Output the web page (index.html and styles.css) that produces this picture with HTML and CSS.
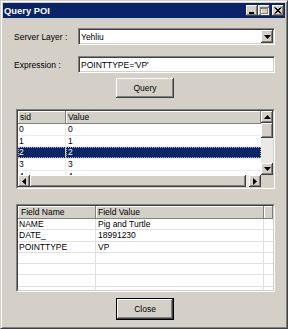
FILE: index.html
```html
<!DOCTYPE html>
<html lang="en">
<head>
    <meta charset="UTF-8">
    <title>Query POI</title>
    <link rel="stylesheet" href="styles.css">
</head>
<body>
    <div class="window">
        <div class="titlebar">
            <span class="title">Query POI</span>
            <div class="caption-buttons">
                <span class="cap-btn">
                    <svg width="8" height="7" viewBox="0 0 8 7"><rect x="1" y="5" width="5" height="2" fill="#000"/></svg>
                </span>
                <span class="cap-btn cap-max">
                    <svg width="9" height="8" viewBox="0 0 9 8"><rect x="1.5" y="1.5" width="7" height="6" fill="none" stroke="#fff"/><rect x="0.5" y="0.5" width="7" height="6" fill="none" stroke="#808080"/><rect x="0" y="0" width="8" height="2" fill="#808080"/></svg>
                </span>
                <span class="cap-btn">
                    <svg width="8" height="7" viewBox="0 0 8 7"><path d="M0.5 0.5 L6.5 6.5 M1.5 0.5 L7.5 6.5 M6.5 0.5 L0.5 6.5 M7.5 0.5 L1.5 6.5" stroke="#000" stroke-width="1"/></svg>
                </span>
            </div>
        </div>

        <div class="dialog">
            <div class="field-row">
                <label class="field-label">Server Layer :</label>
                <div class="combo">
                    <span class="combo-text">Yehliu</span>
                    <span class="combo-btn">
                        <svg width="7" height="4" viewBox="0 0 7 4"><path d="M0 0 H7 L3.5 4 Z" fill="#000"/></svg>
                    </span>
                </div>
            </div>

            <div class="field-row">
                <label class="field-label">Expression :</label>
                <div class="textbox">POINTTYPE='VP'</div>
            </div>

            <div class="btn-row query-row">
                <button class="btn">Query</button>
            </div>

            <!-- result records -->
            <div class="sunken result-grid">
                <div class="grid-inner">
                    <div class="grid-view">
                        <div class="grid-head">
                            <div class="head-cell col-sid">sid</div>
                            <div class="head-cell col-value">Value</div>
                        </div>
                        <div class="grid-row"><div class="cell col-sid">0</div><div class="cell col-value">0</div></div>
                        <div class="grid-row"><div class="cell col-sid">1</div><div class="cell col-value">1</div></div>
                        <div class="grid-row selected"><div class="cell col-sid">2</div><div class="cell col-value">2</div></div>
                        <div class="grid-row"><div class="cell col-sid">3</div><div class="cell col-value">3</div></div>
                        <div class="grid-row"><div class="cell col-sid">4</div><div class="cell col-value">4</div></div>
                    </div>
                    <div class="vscroll">
                        <span class="scroll-btn">
                            <svg width="7" height="4" viewBox="0 0 7 4"><path d="M0 4 H7 L3.5 0 Z" fill="#000"/></svg>
                        </span>
                        <span class="scroll-thumb v-thumb"></span>
                        <span class="scroll-track"></span>
                        <span class="scroll-btn">
                            <svg width="7" height="4" viewBox="0 0 7 4"><path d="M0 0 H7 L3.5 4 Z" fill="#000"/></svg>
                        </span>
                    </div>
                    <div class="hscroll">
                        <span class="scroll-btn">
                            <svg width="4" height="7" viewBox="0 0 4 7"><path d="M4 0 V7 L0 3.5 Z" fill="#000"/></svg>
                        </span>
                        <span class="scroll-thumb h-thumb"></span>
                        <span class="scroll-track"></span>
                        <span class="scroll-btn">
                            <svg width="4" height="7" viewBox="0 0 4 7"><path d="M0 0 V7 L4 3.5 Z" fill="#000"/></svg>
                        </span>
                    </div>
                    <div class="scroll-corner"></div>
                </div>
            </div>

            <!-- selected record fields -->
            <div class="sunken field-list">
                <div class="list-inner">
                    <div class="list-head">
                        <div class="head-cell col-name">Field Name</div>
                        <div class="head-cell col-fvalue">Field Value</div>
                        <div class="head-cell col-rest"></div>
                    </div>
                    <div class="list-row"><div class="lcell col-name">NAME</div><div class="lcell col-fvalue">Pig and Turtle</div><div class="lcell col-rest"></div></div>
                    <div class="list-row"><div class="lcell col-name">DATE_</div><div class="lcell col-fvalue">18991230</div><div class="lcell col-rest"></div></div>
                    <div class="list-row"><div class="lcell col-name">POINTTYPE</div><div class="lcell col-fvalue">VP</div><div class="lcell col-rest"></div></div>
                    <div class="list-row"><div class="lcell col-name"></div><div class="lcell col-fvalue"></div><div class="lcell col-rest"></div></div>
                    <div class="list-row"><div class="lcell col-name"></div><div class="lcell col-fvalue"></div><div class="lcell col-rest"></div></div>
                    <div class="list-row"><div class="lcell col-name"></div><div class="lcell col-fvalue"></div><div class="lcell col-rest"></div></div>
                    <div class="list-row"><div class="lcell col-name"></div><div class="lcell col-fvalue"></div><div class="lcell col-rest"></div></div>
                </div>
            </div>

            <div class="btn-row close-row">
                <button class="btn btn-default">Close</button>
            </div>
        </div>
    </div>
</body>
</html>
```

FILE: styles.css
```css
body {
    margin: 0;
    font-family: "Liberation Sans", Arial, sans-serif;
    font-size: 8.5px;
    color: #000;
}

.window {
    width: 288px;
    height: 329px;
    box-sizing: border-box;
    background-color: #d4d0c8;
    border: 1px solid;
    border-color: #d4d0c8 #404040 #404040 #d4d0c8;
    box-shadow: inset 1px 1px #fff, inset -1px -1px #808080;
    padding: 2px;
    display: flex;
    flex-direction: column;
}

.titlebar {
    height: 15px;
    background-color: #0a246a;
    display: flex;
    align-items: center;
    justify-content: space-between;
    padding: 0 1px 0 1px;
    flex-shrink: 0;
}

.title {
    color: #fff;
    font-weight: bold;
    font-size: 9.4px;
}

.caption-buttons {
    display: flex;
    align-items: center;
}

.cap-btn {
    width: 12px;
    height: 11px;
    background-color: #d4d0c8;
    box-shadow: inset -1px -1px #404040, inset 1px 1px #fff, inset -2px -2px #808080;
    display: flex;
    align-items: center;
    justify-content: center;
}

.cap-max {
    margin-right: 2px;
}

.dialog {
    padding: 10px 9px 0 11px;
    display: flex;
    flex-direction: column;
}

.field-row {
    display: flex;
    align-items: center;
    height: 17px;
    margin-bottom: 11px;
}

.field-row + .field-row {
    margin-bottom: 5px;
}

.field-label {
    width: 64px;
    flex-shrink: 0;
}

.combo, .textbox {
    width: 197px;
    height: 17px;
    box-sizing: border-box;
    background-color: #fff;
    border: 1px solid;
    border-color: #808080 #fff #fff #808080;
    box-shadow: inset 1px 1px #404040, inset -1px -1px #d4d0c8;
    display: flex;
    align-items: center;
    padding-left: 2px;
}

.combo {
    justify-content: space-between;
    padding-right: 1px;
}

.combo-btn {
    width: 12px;
    height: 13px;
    background-color: #d4d0c8;
    box-shadow: inset -1px -1px #404040, inset 1px 1px #fff, inset -2px -2px #808080;
    display: flex;
    align-items: center;
    justify-content: center;
}

.btn-row {
    display: flex;
    justify-content: center;
}

.btn {
    width: 58px;
    height: 20px;
    background-color: #d4d0c8;
    border: none;
    box-shadow: inset -1px -1px #404040, inset 1px 1px #fff, inset -2px -2px #808080;
    font-family: "Liberation Sans", Arial, sans-serif;
    font-size: 8.5px;
    color: #000;
    padding: 0;
}

.btn-default {
    height: 22px;
    border: 1px solid #000;
}

.query-row {
    margin-bottom: 11px;
}

.close-row {
    margin-top: 6px;
}

.sunken {
    width: 259px;
    margin-left: 2px;
    box-sizing: border-box;
    border: 1px solid;
    border-color: #808080 #fff #fff #808080;
}

.result-grid {
    height: 80px;
    margin-bottom: 15px;
}

.grid-inner {
    height: 100%;
    box-sizing: border-box;
    border: 1px solid;
    border-color: #404040 #d4d0c8 #d4d0c8 #404040;
    display: grid;
    grid-template-columns: 1fr 12px;
    grid-template-rows: 1fr 12px;
}

.grid-view {
    background-color: #fff;
    overflow: hidden;
}

.grid-head, .list-head {
    display: flex;
    height: 13px;
}

.head-cell {
    background-color: #d4d0c8;
    box-shadow: inset -1px -1px #808080, inset 1px 1px #fff;
    box-sizing: border-box;
    line-height: 13px;
    padding-left: 2px;
}

.col-sid {
    width: 48px;
}

.col-value {
    flex: 1;
}

.grid-row {
    display: flex;
    height: 11.7px;
    line-height: 11px;
    box-sizing: border-box;
    border-bottom: 1px solid #edebe7;
}

.cell {
    box-sizing: border-box;
    padding-left: 1px;
}

.cell.col-sid {
    border-right: 1px solid #edebe7;
}

.cell.col-value {
    padding-left: 2px;
}

.grid-row.selected {
    background-color: #0a246a;
    color: #fff;
}

.grid-row.selected .cell {
    outline: 1px dotted #b8b4ac;
    outline-offset: -1px;
}

.vscroll, .hscroll {
    display: flex;
    background-color: #ebe9e5;
}

.vscroll {
    flex-direction: column;
}

.scroll-btn, .scroll-thumb {
    background-color: #d4d0c8;
    box-shadow: inset -1px -1px #404040, inset 1px 1px #fff, inset -2px -2px #808080;
    display: flex;
    align-items: center;
    justify-content: center;
    flex-shrink: 0;
}

.scroll-btn {
    width: 12px;
    height: 12px;
}

.v-thumb {
    height: 15px;
}

.h-thumb {
    width: 216px;
}

.scroll-track {
    flex: 1;
}

.scroll-corner {
    background-color: #d4d0c8;
}

.field-list {
    height: 88px;
}

.list-inner {
    height: 100%;
    box-sizing: border-box;
    border: 1px solid;
    border-color: #404040 #d4d0c8 #d4d0c8 #404040;
    background-color: #fff;
    overflow: hidden;
}

.col-name {
    width: 78px;
}

.col-fvalue {
    width: 168px;
}

.col-rest {
    flex: 1;
}

.list-head .col-name {
    padding-left: 3px;
}

.list-row {
    display: flex;
    height: 11.3px;
    line-height: 10.5px;
    box-sizing: border-box;
    border-bottom: 1px solid #e2e0dc;
}

.lcell {
    box-sizing: border-box;
    padding-left: 1px;
}

.lcell.col-name, .lcell.col-fvalue {
    border-right: 1px solid #e2e0dc;
}

.lcell.col-fvalue {
    padding-left: 2px;
}
```
